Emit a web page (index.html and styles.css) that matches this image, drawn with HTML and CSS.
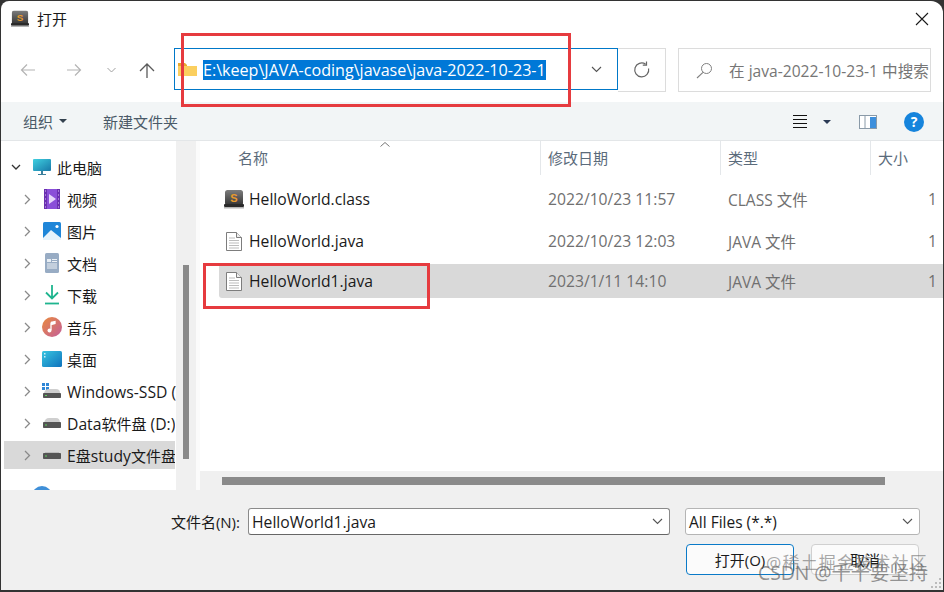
FILE: index.html
```html
<!DOCTYPE html>
<html lang="zh">
<head>
<meta charset="utf-8">
<title>打开</title>
<link rel="stylesheet" href="styles.css">
</head>
<body>
<div class="window">
  <header class="titlebar">
    <svg class="app-icon" width="18" height="18" viewBox="0 0 20 19"><use href="#sublime"/></svg>
    <span class="title">打开</span>
    <svg class="close" width="14" height="14" viewBox="0 0 14 14"><path d="M1 1l12 12M13 1L1 13" stroke="#1a1a1a" stroke-width="1.1" fill="none"/></svg>
  </header>

  <nav class="navbar">
    <div class="nav-buttons">
      <svg width="16" height="14" viewBox="0 0 16 14"><path d="M15 7H1.5M7 1.5L1.5 7 7 12.5" stroke="#b4b4b4" stroke-width="1.2" fill="none"/></svg>
      <svg width="16" height="14" viewBox="0 0 16 14"><path d="M1 7h13.5M9 1.5L14.5 7 9 12.5" stroke="#b4b4b4" stroke-width="1.2" fill="none"/></svg>
      <svg width="9" height="6" viewBox="0 0 9 6"><path d="M.5 1l4 4 4-4" stroke="#a0a0a0" stroke-width="1" fill="none"/></svg>
      <svg width="16" height="15" viewBox="0 0 16 15"><path d="M8 15V1.2M1 8l7-7 7 7" stroke="#5a5a5a" stroke-width="1.3" fill="none"/></svg>
    </div>
    <div class="address">
      <svg class="folder" width="19" height="14" viewBox="0 0 19 14"><path d="M0 1h7l2 2v1H0z" fill="#e8a92e"/><path d="M0 4h19v10H0z" fill="#fbcf5f"/></svg>
      <span class="path">E:\keep\JAVA-coding\javase\java-2022-10-23-1</span>
      <svg class="addr-caret" width="11" height="7" viewBox="0 0 11 7"><path d="M1 1l4.500 4.500L10 1" stroke="#555" stroke-width="1.1" fill="none"/></svg>
    </div>
    <div class="refresh">
      <svg width="18" height="18" viewBox="0 0 18 18"><path d="M15.6 7.5A7 7 0 1 1 12.5 3M13.5 .5V4.200H9.800" stroke="#666" stroke-width="1.2" fill="none"/></svg>
    </div>
    <div class="search">
      <svg width="17" height="17" viewBox="0 0 17 17"><circle cx="10.5" cy="6.5" r="5" stroke="#808080" fill="none"/><path d="M7 10.3L1 16" stroke="#808080" stroke-width="1.1"/></svg>
      <span class="search-text">在 java-2022-10-23-1 中搜索</span>
    </div>
  </nav>

  <div class="toolbar">
    <span class="tool">组织<i class="caret"></i></span>
    <span class="tool new-folder">新建文件夹</span>
    <div class="tool-right">
      <svg width="14" height="13" viewBox="0 0 14 13"><path d="M0 .5h14M0 4.500h14M0 8.500h14M0 12.500h14" stroke="#111" stroke-width="1"/></svg>
      <i class="caret dark"></i>
      <svg class="pane" width="18" height="14" viewBox="0 0 18 14"><rect x=".5" y=".5" width="17" height="13" fill="#fff" stroke="#8a9aa8"/><path d="M6 1v12" stroke="#8a9aa8"/><rect x="11" y="2" width="6" height="11" fill="#3d8fdc"/></svg>
      <span class="help">?</span>
    </div>
  </div>

  <main class="main">
    <aside class="sidebar">
      <div class="tree">
        <div class="node top"><svg class="chev" width="10" height="10" viewBox="0 0 10 10"><path d="M1 3l4 4 4-4" stroke="#333" stroke-width="1.3" fill="none"/></svg>
          <svg class="ico" width="18" height="18" viewBox="0 0 18 18"><defs><linearGradient id="pc" x1="0" y1="0" x2="1" y2="1"><stop offset="0" stop-color="#3fd0e0"/><stop offset="1" stop-color="#1878a8"/></linearGradient></defs><rect y="1" width="18" height="12" rx="1" fill="url(#pc)"/><path d="M5 16h8v1H5zM8 13h2v3H8z" fill="#3c7f9c"/></svg>
          <span>此电脑</span></div>
        <div class="node"><svg class="chev" width="7" height="11" viewBox="0 0 7 11"><use href="#chev"/></svg>
          <svg class="ico" width="16" height="20" viewBox="0 0 16 20"><rect width="16" height="20" rx="1.5" fill="#8a4fd8"/><path d="M0 0h3v20H0zM13 0h3v20h-3z" fill="#6a30b0"/><path d="M1 2h1M1 6h1M1 10h1M1 14h1M1 18h1M14 2h1M14 6h1M14 10h1M14 14h1M14 18h1" stroke="#d9c2f5"/><path d="M5 5l7 5-7 5z" fill="#e6d7fa"/></svg>
          <span>视频</span></div>
        <div class="node"><svg class="chev" width="7" height="11" viewBox="0 0 7 11"><use href="#chev"/></svg>
          <svg class="ico" width="18" height="18" viewBox="0 0 18 18"><rect width="18" height="18" rx="1.5" fill="#1f86d8"/><circle cx="14" cy="4.5" r="1.6" fill="#fff"/><path d="M0 16l8-8 10 8v2H0z" fill="#e8f3fb"/></svg>
          <span>图片</span></div>
        <div class="node"><svg class="chev" width="7" height="11" viewBox="0 0 7 11"><use href="#chev"/></svg>
          <svg class="ico" width="14" height="20" viewBox="0 0 14 20"><rect width="14" height="20" rx="1.5" fill="#98acc4"/><path d="M2 6h4v3H2z" fill="#e8eef4"/><path d="M7 6.500h5M7 8.500h5M2 11h10M2 13h10M2 15h10" stroke="#eef2f6"/></svg>
          <span>文档</span></div>
        <div class="node"><svg class="chev" width="7" height="11" viewBox="0 0 7 11"><use href="#chev"/></svg>
          <svg class="ico" width="14" height="20" viewBox="0 0 14 20"><path d="M7 0v13M1 7.500l6 6 6-6" stroke="#1fb58f" stroke-width="1.8" fill="none"/><path d="M0 18.500h14" stroke="#1fb58f" stroke-width="1.8"/></svg>
          <span>下载</span></div>
        <div class="node"><svg class="chev" width="7" height="11" viewBox="0 0 7 11"><use href="#chev"/></svg>
          <svg class="ico" width="20" height="20" viewBox="0 0 20 20"><defs><linearGradient id="mu" x1="0" y1="0" x2="1" y2="1"><stop offset="0" stop-color="#e98a3c"/><stop offset="1" stop-color="#c45f9c"/></linearGradient></defs><circle cx="10" cy="10" r="10" fill="url(#mu)"/><path d="M9 5.500V13M9 5.500l4-1v2l-4 1" stroke="#fff" stroke-width="1.3" fill="#fff"/><circle cx="7.5" cy="13.5" r="2" fill="#fff"/></svg>
          <span>音乐</span></div>
        <div class="node"><svg class="chev" width="7" height="11" viewBox="0 0 7 11"><use href="#chev"/></svg>
          <svg class="ico" width="20" height="16" viewBox="0 0 20 16"><defs><linearGradient id="dk" x1="0" y1="0" x2="1" y2="1"><stop offset="0" stop-color="#37c5e0"/><stop offset="1" stop-color="#0f72bd"/></linearGradient></defs><rect width="20" height="16" rx="1.5" fill="url(#dk)"/><path d="M2 2h1.500v1.500H2zM2 5h1.500v1.500H2z" fill="#cdeff8"/></svg>
          <span>桌面</span></div>
        <div class="node"><svg class="chev" width="7" height="11" viewBox="0 0 7 11"><use href="#chev"/></svg>
          <svg class="ico" width="20" height="16" viewBox="0 0 20 16"><path d="M0 0h3v3H0zM4 0h3v3H4zM0 4h3v3H0zM4 4h3v3H4z" fill="#2f86d6"/><path d="M2 10q1-4 5-4h7q4 0 4 4z" fill="#cfcfcf"/><rect x="1" y="10" width="18" height="5" rx=".8" fill="#555"/><path d="M3 12h2v1H3z" fill="#5fd35f"/></svg>
          <span class="clip lat">Windows-SSD (C:)</span></div>
        <div class="node"><svg class="chev" width="7" height="11" viewBox="0 0 7 11"><use href="#chev"/></svg>
          <svg class="ico" width="20" height="12" viewBox="0 0 20 12"><path d="M2 6q1-5 5-5h7q4 0 4 5z" fill="#cfcfcf"/><rect x="1" y="5" width="18" height="6" rx=".8" fill="#555"/><path d="M3 7.500h2v1H3z" fill="#5fd35f"/></svg>
          <span class="clip"><span class="lat">Data</span>软件盘<span class="lat"> (D:)</span></span></div>
        <div class="node selected"><svg class="chev" width="7" height="11" viewBox="0 0 7 11"><use href="#chev"/></svg>
          <svg class="ico" width="20" height="12" viewBox="0 0 20 12"><path d="M3 3h14v2H3z" fill="#bdbdbd"/><rect x="1" y="4" width="18" height="6" rx=".8" fill="#555"/><path d="M3 6.500h2v1H3z" fill="#5fd35f"/></svg>
          <span class="clip"><span class="lat">E</span>盘<span class="lat">study</span>文件盘<span class="lat"> (E:)</span></span></div>
        <div class="node top cut"><svg class="ico" width="20" height="20" viewBox="0 0 20 20"><circle cx="10" cy="10" r="10" fill="#3f8fd8"/></svg><span>网络</span></div>
      </div>
      <div class="vscroll"><div class="vthumb"></div></div>
    </aside>

    <section class="list">
      <div class="list-body">
        <div class="head">
          <div class="col c-name">名称<svg class="sort" width="10" height="5" viewBox="0 0 10 5"><path d="M.5 4.500L5 .5l4.500 4" stroke="#777" fill="none"/></svg></div>
          <div class="col c-date">修改日期</div>
          <div class="col c-type">类型</div>
          <div class="col c-size">大小</div>
        </div>
        <div class="row first">
          <div class="c-name cell"><svg class="fico" width="20" height="19" viewBox="0 0 20 19"><use href="#sublime"/></svg><span class="fname">HelloWorld.class</span></div>
          <div class="c-date cell muted">2022/10/23 11:57</div>
          <div class="c-type cell muted">CLASS 文件</div>
          <div class="c-size cell muted num">1</div>
        </div>
        <div class="row">
          <div class="c-name cell"><svg class="fico" width="16" height="19" viewBox="0 0 16 19"><use href="#doc"/></svg><span class="fname">HelloWorld.java</span></div>
          <div class="c-date cell muted">2022/10/23 12:03</div>
          <div class="c-type cell muted">JAVA 文件</div>
          <div class="c-size cell muted num">1</div>
        </div>
        <div class="row active">
          <div class="c-name cell"><svg class="fico" width="16" height="19" viewBox="0 0 16 19"><use href="#doc"/></svg><span class="fname">HelloWorld1.java</span></div>
          <div class="c-date cell muted">2023/1/11 14:10</div>
          <div class="c-type cell muted">JAVA 文件</div>
          <div class="c-size cell muted num">1</div>
        </div>
      </div>
      <div class="hscroll"><div class="hthumb"></div></div>
    </section>
  </main>

  <footer class="footer">
    <div class="f-row">
      <label class="f-label">文件名(N):</label>
      <div class="combo name-combo"><span>HelloWorld1.java</span><svg width="11" height="7" viewBox="0 0 11 7"><path d="M1 1l4.500 4.500L10 1" stroke="#555" stroke-width="1.1" fill="none"/></svg></div>
      <div class="combo type-combo"><span>All Files (*.*)</span><svg width="11" height="7" viewBox="0 0 11 7"><path d="M1 1l4.500 4.500L10 1" stroke="#555" stroke-width="1.1" fill="none"/></svg></div>
    </div>
    <div class="f-row buttons">
      <button class="btn primary">打开(O)</button>
      <button class="btn">取消</button>
    </div>
    <svg class="grip" width="12" height="12" viewBox="0 0 12 12"><path d="M9 1h2v2H9zM5 5h2v2H5zM9 5h2v2H9zM1 9h2v2H1zM5 9h2v2H5zM9 9h2v2H9z" fill="#bcbcbc"/></svg>
  </footer>
</div>

<svg class="defs" width="0" height="0">
  <defs>
    <linearGradient id="subl" x1="0" y1="0" x2="0" y2="1"><stop offset="0" stop-color="#7d7d7d"/><stop offset="1" stop-color="#333"/></linearGradient>
    <symbol id="sublime" viewBox="0 0 20 19">
      <rect x="1" y="0" width="18" height="15.500" rx="2.500" fill="url(#subl)"/>
      <rect x="0" y="14" width="20" height="3" rx="1" fill="#2a2a2a"/>
      <path d="M0 17h20v1.500H0z" fill="#b5b5b5"/>
      <text x="10" y="12" font-size="11" font-weight="700" font-family="Liberation Sans, sans-serif" text-anchor="middle" fill="#e89a2c">S</text>
    </symbol>
    <symbol id="doc" viewBox="0 0 16 19">
      <path d="M.5.500h10l5 5v13H.5z" fill="#fff" stroke="#7d7d7d"/>
      <path d="M10.500.500v5h5" fill="#eee" stroke="#7d7d7d"/>
      <path d="M3 6h6M3 8.500h10M3 11h10M3 13.500h10M3 16h10" stroke="#bdbdbd"/>
    </symbol>
    <symbol id="chev" viewBox="0 0 7 11">
      <path d="M1 1l4.500 4.500L1 10" stroke="#8a8a8a" stroke-width="1.3" fill="none"/>
    </symbol>
  </defs>
</svg>

<div class="mark mark-addr"></div>
<div class="mark mark-file"></div>
<div class="wm wm-a">@稀土掘金技术社区</div>
<div class="wm wm-b">CSDN @千千要坚持</div>
</body>
</html>
```

FILE: styles.css
```css
* { box-sizing: border-box; }
html, body { margin: 0; height: 100%; }
body {
  width: 944px; height: 592px; overflow: hidden; position: relative;
  background: #333;
  font-family: "Open Sans", "Noto Sans CJK SC", sans-serif;
  font-size: 15px; color: #1a1a1a;
}
.window {
  position: absolute; inset: 1px 1px 2px 1px;
  display: flex; flex-direction: column;
  background: #fff; border-radius: 8px 12px 0 0; overflow: hidden;
}
.titlebar { height: 39px; flex: none; display: flex; align-items: center; padding: 0 14px 4px 10px; }
.app-icon { margin-right: 8px; }
.title { font-size: 15px; }
.close { margin-left: auto; }

.navbar { height: 62px; flex: none; display: flex; align-items: flex-start; padding: 8px 0 0 0; }
.nav-buttons { width: 173px; height: 44px; display: flex; align-items: center; padding-left: 19px; }
.nav-buttons svg:nth-child(2) { margin-left: 30px; }
.nav-buttons svg:nth-child(3) { margin-left: 25px; }
.nav-buttons svg:nth-child(4) { margin-left: 23px; }
.address {
  width: 444px; height: 42px; display: flex; align-items: center;
  border: 1px solid #0078c8; padding: 0 15px 0 3px;
}
.folder { flex: none; }
.path { background: #0078d7; color: #fff; font-size: 16.1px; line-height: 20px; margin: 1px 0 0 6px; white-space: nowrap; }
.addr-caret { margin-left: auto; }
.refresh {
  width: 48px; height: 44px; display: flex; align-items: center; justify-content: center;
  border: 1px solid #dcdcdc; border-left: none;
}
.search {
  width: 253px; height: 44px; margin-left: 12px; display: flex; align-items: center;
  border: 1px solid #dcdcdc; padding-left: 17px; overflow: hidden;
}
.search-text { margin-left: 16px; color: #767676; font-size: 15.6px; white-space: nowrap; }

.toolbar {
  height: 39px; flex: none; display: flex; align-items: center; background: #f2f5f6;
  border-bottom: 1px solid #e3e6e8; padding: 0 19px 0 22px;
}
.tool { color: #4a5a68; font-size: 15px; display: flex; align-items: center; }
.new-folder { margin-left: 36px; }
.caret { display: inline-block; margin-left: 6px; border: 4px solid transparent; border-top: 4px solid #33414e; border-bottom: none; }
.tool-right { margin-left: auto; display: flex; align-items: center; padding-top: 1px; }
.caret.dark { margin-left: 16px; border-top-color: #2b3a55; }
.pane { margin-left: 28px; }
.help {
  margin-left: 27px; width: 20px; height: 20px; border-radius: 50%;
  background: #1684dc; color: #fff; font-size: 14px; font-weight: 700;
  display: flex; align-items: center; justify-content: center;
}

.main { flex: 1; min-height: 0; display: flex; }
.sidebar { width: 199px; flex: none; display: flex; background: #fff; position: relative; }
.tree { width: 175px; flex: none; padding: 10px 0 0 3px; overflow: hidden; }
.node { height: 32px; display: flex; align-items: center; position: relative; padding-left: 63px; white-space: nowrap; font-size: 15px; color: #1a1a1a; }
.node .clip { overflow: hidden; padding-top: 2px; }
.lat { font-size: 15.7px; }
.node.selected { height: 28px; margin: 2px 1px 2px 0; background: #d9d9d9; }
.node .chev { position: absolute; left: 20px; top: 50%; margin-top: -5px; }
.node.top .chev { left: 7px; }
.node.top { padding-left: 53px; }
.node .ico { position: absolute; left: 48px; top: 50%; transform: translate(-50%, -50%); }
.node.top .ico { left: 38px; }
.node.cut { margin-top: 11px; }
.vscroll { width: 20px; flex: none; background: #f0f0f0; position: relative; }
.vthumb { width: 6px; height: 194px; background: #8a8a8a; margin: 124px 0 0 7px; }
.sidebar::after { content: ""; width: 4px; background: #fbfbfb; }

.list { flex: 1; min-width: 0; display: flex; flex-direction: column; overflow: hidden; }
.list-body { flex: 1; min-height: 0; }
.head { height: 36px; display: flex; }
.col { color: #5b6b7b; font-size: 15px; height: 34px; padding-bottom: 2px; display: flex; align-items: center; border-right: 1px solid #e4e7ea; position: relative; }
.c-name { width: 341px; flex: none; padding-left: 38px; }
.c-date { width: 180px; flex: none; padding-left: 7px; }
.c-type { width: 150px; flex: none; padding-left: 7px; }
.c-size { width: 80px; flex: none; padding-left: 7px; }
.col.c-size { border-right: none; }
.sort { position: absolute; left: 180px; top: 1px; }
.row { height: 34px; display: flex; margin-left: 19px; margin-top: 8px; align-items: center; }
.row.first { margin-top: 5px; }
.row.active { background: #d9d9d9; margin-top: 6px; border-radius: 3px 0 0 3px; }
.row .c-name { width: 322px; padding-left: 5px; }
.cell { display: flex; align-items: center; white-space: nowrap; font-size: 15.7px; }
.c-type.cell { font-size: 15.5px; }
.fico { width: 20px; flex: none; margin-right: 5px; }
.fname { color: #1a1a1a; }
.muted { color: #707070; }
.num { padding-left: 57px; }

.hscroll { height: 19px; flex: none; background: #f0f0f0; padding-top: 6px; }
.hthumb { width: 663px; height: 8px; background: #8a8a8a; margin-left: 22px; }

.footer { height: 100px; flex: none; background: #f0f0f0; padding-top: 18px; position: relative; }
.f-row { display: flex; align-items: center; }
.f-label { width: 247px; text-align: right; font-size: 15px; padding-right: 8px; white-space: nowrap; }
.combo {
  height: 27px; display: flex; align-items: center; justify-content: space-between;
  background: #fff; border: 1px solid #b5b5b5; border-radius: 3px; padding: 0 6px 0 3px; font-size: 15.7px;
}
.name-combo { width: 422px; border-color: #8a8a8a; border-bottom-color: #666; }
.type-combo { width: 235px; margin-left: 15px; font-size: 15.5px; }
.buttons { margin: 9px 0 0 685px; gap: 17px; }
.btn {
  width: 108px; height: 31px; background: #fbfbfb; border: 1px solid #d0d0d0; border-radius: 4px;
  font: inherit; font-size: 15px; color: #1a1a1a;
}
.btn.primary { border: 1.5px solid #0a7ac8; }
.grip { position: absolute; right: 1px; bottom: 1px; }

.defs { position: absolute; }
.mark { position: absolute; border: 3px solid #e63b3f; }
.mark-addr { left: 181px; top: 33px; width: 390px; height: 74px; }
.mark-file { left: 203px; top: 263px; width: 227px; height: 46px; }
.wm { position: absolute; white-space: nowrap; pointer-events: none; line-height: 20px; }
.wm-a { left: 766px; top: 553px; font-size: 17px; color: rgba(110,110,110,.6); letter-spacing: 1.2px; }
.wm-b { left: 758px; top: 563px; font-size: 19.3px; color: rgba(90,90,90,.65); }
```
